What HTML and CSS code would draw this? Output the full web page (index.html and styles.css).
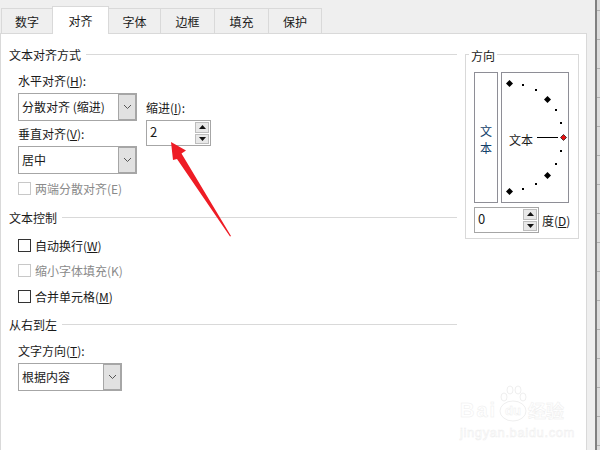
FILE: index.html
```html
<!DOCTYPE html>
<html lang="zh-CN">
<head>
<meta charset="utf-8">
<title>设置单元格格式</title>
<link rel="stylesheet" href="styles.css">
</head>
<body>
<div class="window">
  <div class="dialog">
    <div class="tabs">
      <span class="tab">数字</span>
      <span class="tab active">对齐</span>
      <span class="tab">字体</span>
      <span class="tab">边框</span>
      <span class="tab">填充</span>
      <span class="tab">保护</span>
    </div>
    <div class="panel">
      <div class="main">
        <div class="section-title"><span>文本对齐方式</span><i></i></div>
        <div class="align-row">
          <div class="align-col">
            <div class="label">水平对齐(<u>H</u>):</div>
            <div class="select wide"><span>分散对齐 (缩进)</span><b class="arrow"><svg width="9" height="6" viewBox="0 0 9 6"><path d="M1 1l3.500 3.500L8 1" fill="none" stroke="#555" stroke-width="1"/></svg></b></div>
            <div class="label second">垂直对齐(<u>V</u>):</div>
            <div class="select wide"><span>居中</span><b class="arrow"><svg width="9" height="6" viewBox="0 0 9 6"><path d="M1 1l3.500 3.500L8 1" fill="none" stroke="#555" stroke-width="1"/></svg></b></div>
            <label class="check disabled justify"><s class="box"></s><span>两端分散对齐(E)</span></label>
          </div>
          <div class="indent-col">
            <div class="label">缩进(<u>I</u>):</div>
            <div class="spin indent">
              <span>2</span>
              <div class="spin-btns">
                <b><svg width="7" height="4" viewBox="0 0 7 4"><path d="M3.500 0L7 4H0z" fill="#111"/></svg></b>
                <b><svg width="7" height="4" viewBox="0 0 7 4"><path d="M0 0h7L3.500 4z" fill="#111"/></svg></b>
              </div>
            </div>
          </div>
        </div>
        <div class="section-title control"><span>文本控制</span><i></i></div>
        <div class="checks">
          <label class="check"><s class="box"></s><span>自动换行(<u>W</u>)</span></label>
          <label class="check disabled"><s class="box"></s><span>缩小字体填充(K)</span></label>
          <label class="check"><s class="box"></s><span>合并单元格(<u>M</u>)</span></label>
        </div>
        <div class="section-title rtl"><span>从右到左</span><i></i></div>
        <div class="label direction">文字方向(<u>T</u>):</div>
        <div class="select narrow"><span>根据内容</span><b class="arrow"><svg width="9" height="6" viewBox="0 0 9 6"><path d="M1 1l3.500 3.500L8 1" fill="none" stroke="#555" stroke-width="1"/></svg></b></div>
      </div>
      <div class="orientation">
        <span class="legend">方向</span>
        <div class="orient-boxes">
          <div class="vertical-text"><span>文</span><span>本</span></div>
          <div class="dial">
            <svg class="dial-art" width="67" height="130" viewBox="0 0 67 130">
              <g fill="#000">
                <path d="M7.500 7l3.500 3.500-3.500 3.500L4 10.500z"/>
                <path d="M45.500 23l3.500 3.500-3.500 3.500-3.500-3.500z"/>
                <path d="M45.500 99l3.500 3.500-3.500 3.500-3.500-3.500z"/>
                <path d="M7.500 115l3.500 3.500-3.500 3.500-3.500-3.500z"/>
                <rect x="20" y="11" width="2" height="2"/>
                <rect x="33" y="16" width="2" height="2"/>
                <rect x="53" y="36" width="2" height="2"/>
                <rect x="58" y="49" width="2" height="2"/>
                <rect x="58" y="77" width="2" height="2"/>
                <rect x="53" y="90" width="2" height="2"/>
                <rect x="33" y="110" width="2" height="2"/>
                <rect x="20" y="115" width="2" height="2"/>
                <rect x="35" y="64" width="21" height="1"/>
              </g>
              <path d="M61.500 61.500l3 3-3 3-3-3z" fill="#e81010" stroke="#222" stroke-width="0.800"/>
            </svg>
            <span class="dial-text">文本</span>
          </div>
        </div>
        <div class="degree-row">
          <div class="spin degree">
            <span>0</span>
            <div class="spin-btns">
              <b><svg width="7" height="4" viewBox="0 0 7 4"><path d="M3.500 0L7 4H0z" fill="#111"/></svg></b>
              <b><svg width="7" height="4" viewBox="0 0 7 4"><path d="M0 0h7L3.500 4z" fill="#111"/></svg></b>
            </div>
          </div>
          <span class="degree-label">度(<u>D</u>)</span>
        </div>
      </div>
      <svg class="red-arrow" width="70" height="100" viewBox="0 0 70 100">
        <path d="M2 2L17 10.500 12.500 13.500 62 96 61 96.500 8 19 4 20z" fill="#ee1c25"/>
      </svg>
      <div class="watermark">
        <div class="wm-logo">
          <span class="wm-bai">Bai</span>
          <div class="wm-paw">
            <svg width="30" height="37" viewBox="0 0 30 37"><g fill="#fff" stroke="#efefef" stroke-width="1"><ellipse cx="6" cy="12" rx="3" ry="4"/><ellipse cx="12" cy="5" rx="3" ry="4"/><ellipse cx="20" cy="5" rx="3" ry="4"/><ellipse cx="25" cy="12" rx="3" ry="4"/><ellipse cx="15" cy="26" rx="13" ry="10"/></g></svg>
            <span class="wm-du">du</span>
          </div>
          <span class="wm-cn">经验</span>
        </div>
        <div class="wm-url">jingyan.baidu.com</div>
      </div>
    </div>
  </div>
  <div class="sheet-edge">
    <div class="sheet-line first"></div>
    <div class="sheet-line"></div>
    <div class="sheet-line"></div>
    <div class="sheet-line"></div>
    <div class="sheet-line"></div>
    <div class="sheet-line"></div>
    <div class="sheet-line"></div>
    <div class="sheet-line"></div>
    <div class="sheet-line"></div>
    <div class="sheet-line"></div>
    <div class="sheet-line"></div>
    <div class="sheet-line"></div>
    <div class="sheet-line"></div>
    <div class="sheet-line"></div>
    <div class="sheet-line"></div>
    <div class="sheet-line"></div>
  </div>
</div>
</body>
</html>
```
FILE: styles.css
```css
* { box-sizing: border-box; }
html, body { margin: 0; padding: 0; }
body { width: 600px; height: 450px; overflow: hidden; background: #efefef; font-family: "Noto Sans CJK SC", "Liberation Sans", sans-serif; font-size: 12px; color: #1a1a1a; }
u { text-decoration: underline; }
s { text-decoration: none; }
.window { display: flex; width: 600px; height: 450px; }
.dialog { width: 595px; height: 450px; padding-right: 8px; background: #efefef; display: flex; flex-direction: column; }
.tabs { display: flex; height: 34px; padding: 8px 0 0 1px; }
.tab { width: 54px; height: 26px; border: 1px solid #d9d9d9; border-bottom: 0; border-left: 0; display: flex; align-items: center; justify-content: center; line-height: 1; background: #efefef; }
.tab:first-child { width: 52px; border-left: 1px solid #d9d9d9; }
.tab:last-child { width: 53px; }
.tab.active { width: 57px; height: 28px; margin-top: -2px; margin-left: -1px; border: 1px solid #d9d9d9; border-bottom: 0; background: #fff; position: relative; z-index: 1; }
.tab.active + .tab { width: 52px; }
.panel { position: relative; flex: 1; display: flex; background: #fff; border: 1px solid #d9d9d9; border-bottom: 0; margin-top: -1px; }
.main { width: 456px; padding: 12px 0 0 8px; }
.section-title { display: flex; align-items: center; height: 18px; line-height: 18px; gap: 5px; }
.section-title i { flex: 1; height: 1px; margin-top: -1px; background: #d9d9d9; }
.section-title.control { margin-top: 7px; }
.section-title.rtl { margin-top: 7px; }
.align-row { display: flex; }
.align-col { width: 128px; padding: 8px 0 0 9px; }
.label { height: 18px; line-height: 18px; }
.label.second { margin-top: 4px; }
.select { display: flex; justify-content: space-between; height: 28px; margin-top: 3px; border: 1px solid #a6a6a6; background: #fff; }
.select span { padding-left: 3px; line-height: 26px; }
.select.wide { width: 119px; }
.select.narrow { width: 104px; margin-left: 9px; }
.arrow { width: 18px; background: #e1e1e1; border: 1px solid #a6a6a6; display: flex; align-items: center; justify-content: center; }
.indent-col { padding: 35px 0 0 9px; }
.spin { display: flex; justify-content: space-between; border: 1px solid #a6a6a6; background: #fff; }
.spin > span { padding: 3px 3px 0; font-size: 13px; line-height: 16px; }
.spin-btns { width: 16px; display: flex; flex-direction: column; padding: 1px; gap: 1px; }
.spin-btns b { flex: 1; background: #e8e8e8; border: 1px solid #bdbdbd; display: flex; align-items: center; justify-content: center; }
.spin.indent { width: 65px; height: 26px; margin-top: 3px; }
.check { display: flex; align-items: center; gap: 4px; height: 25.500px; }
.box { width: 13px; height: 13px; border: 1px solid #333; background: #fff; }
.check.disabled { color: #8a8a8a; }
.check.disabled .box { border-color: #c8c8c8; }
.check.justify { margin-top: 2px; }
.checks { padding: 6px 0 0 9px; }
.label.direction { margin: 8px 0 0 9px; }
.orientation { position: relative; width: 114px; height: 185px; margin: 20px 0 0 8px; border: 1px solid #d9d9d9; padding: 17px 0 0 8px; }
.legend { position: absolute; left: 3px; top: -8px; padding: 0 2px; background: #fff; line-height: 18px; }
.orient-boxes { display: flex; gap: 3px; height: 131px; }
.vertical-text { width: 24px; padding-top: 2px; border: 1px solid #8e8e96; display: flex; flex-direction: column; align-items: center; justify-content: center; gap: 4px; line-height: 13px; color: #12406a; }
.dial { position: relative; width: 68px; border: 1px solid #8e8e96; display: flex; align-items: center; }
.dial-art { position: absolute; left: 0; top: 0; }
.dial-text { position: relative; padding-left: 7px; line-height: 16px; margin-top: 5px; }
.degree-row { display: flex; align-items: center; gap: 3px; margin-top: 4px; }
.spin.degree { width: 65px; height: 26px; }
.red-arrow { position: absolute; left: 168px; top: 106px; }
.watermark { position: absolute; left: 459px; top: 351px; width: 108px; color: #fff; -webkit-text-stroke: 0.500px #eeeeee; }
.wm-logo { display: flex; align-items: flex-end; height: 37px; }
.wm-bai { width: 38px; font-family: "Liberation Sans", sans-serif; font-size: 20px; font-weight: 700; letter-spacing: 2px; line-height: 24px; }
.wm-paw { position: relative; width: 30px; height: 37px; }
.wm-du { position: absolute; left: 7px; top: 19px; font-family: "Liberation Sans", sans-serif; font-size: 13px; font-weight: 700; line-height: 14px; }
.wm-cn { font-size: 18px; line-height: 24px; font-weight: 700; }
.wm-url { margin-top: 3px; font-family: "Liberation Sans", sans-serif; font-size: 13px; line-height: 15px; letter-spacing: 0.600px; white-space: nowrap; }
.sheet-edge { width: 5px; height: 450px; background: #dcdcdc; border-left: 2px solid #808080; }
.sheet-line { height: 29px; border-bottom: 1px solid #b0b0b0; }
.sheet-line.first { height: 11px; }
```
